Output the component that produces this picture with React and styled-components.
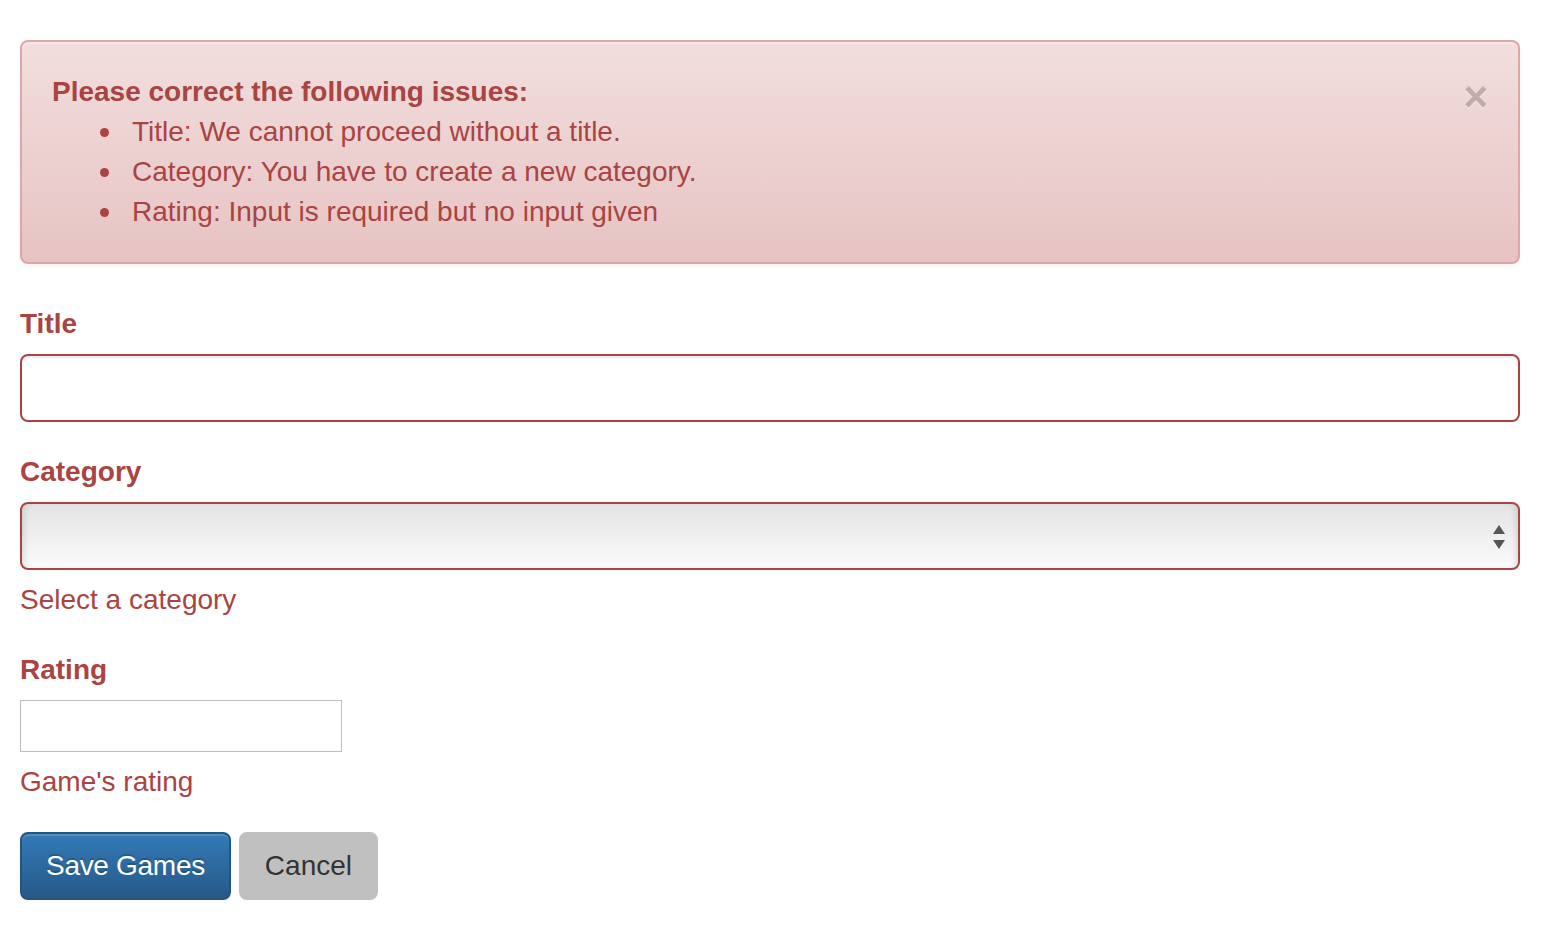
import React from "react";
import styled, { createGlobalStyle } from "styled-components";

const Global = createGlobalStyle`
  html, body { margin: 0; padding: 0; background: #fff; }
  body { font-family: "Liberation Sans", Arial, Helvetica, sans-serif; font-size: 28px; line-height: 40px; color: #333; }
  * { box-sizing: border-box; }
`;

const Page = styled.div`
  width: 1500px;
  margin-left: 20px;
  padding-top: 40px;
`;

const Alert = styled.div`
  position: relative;
  padding: 30px 70px 30px 30px;
  margin-bottom: 40px;
  border: 2px solid #dca7a7;
  border-radius: 8px;
  color: #a94442;
  background-image: linear-gradient(to bottom, #f2dede 0%, #e7c3c3 100%);
  box-shadow: inset 0 2px 0 rgba(255,255,255,.25), 0 2px 4px rgba(0,0,0,.05);
`;

const AlertTitle = styled.strong`
  display: block;
  font-weight: bold;
`;

const IssueList = styled.ul`
  margin: 0;
  padding-left: 80px;
  list-style: none;
`;

const Issue = styled.li`
  position: relative;
  line-height: 40px;
  &::before {
    content: "";
    position: absolute;
    left: -32px;
    top: 16px;
    width: 9px;
    height: 9px;
    border-radius: 50%;
    background: #a94442;
  }
`;

const Close = styled.button`
  position: absolute;
  top: 34px;
  right: 30px;
  padding: 0;
  border: 0;
  background: transparent;
  font-family: "Liberation Sans", Arial, sans-serif;
  font-size: 42px;
  font-weight: bold;
  line-height: 42px;
  color: #000;
  opacity: .2;
  text-shadow: 0 2px 0 #fff;
  cursor: pointer;
`;

const FormGroup = styled.div`
  margin-bottom: 30px;
  display: flow-root;
`;

const Label = styled.label`
  display: inline-block;
  margin-bottom: 10px;
  font-weight: bold;
  color: #a94442;
`;

const TextInput = styled.input`
  display: block;
  width: 100%;
  height: 68px;
  padding: 12px 24px;
  font: inherit;
  color: #555;
  background: #fff;
  border: 2px solid #a94442;
  border-radius: 8px;
  box-shadow: inset 0 2px 2px rgba(0,0,0,.075);
  outline: none;
`;

const SelectBox = styled.div`
  position: relative;
  height: 68px;
  border: 2px solid #a94442;
  border-radius: 8px;
  background: linear-gradient(to bottom, #e3e3e3 0%, #efefef 50%, #fbfbfb 100%);
  box-shadow: inset 6px 0 6px -4px rgba(0,0,0,.12), inset -6px 0 6px -4px rgba(0,0,0,.12);
`;

const Arrows = styled.svg`
  position: absolute;
  right: 12px;
  top: 20px;
`;

const Help = styled.span`
  display: block;
  margin-top: 10px;
  color: #a94442;
`;

const SmallInput = styled.input`
  display: block;
  width: 322px;
  height: 52px;
  border: 1px solid #bdbdbd;
  background: #fff;
  border-radius: 0;
  font: inherit;
  outline: none;
`;

const Actions = styled.div`
  display: flex;
  gap: 8px;
`;

const Button = styled.button`
  height: 68px;
  padding: 12px 24px;
  font-family: "Liberation Sans", Arial, sans-serif;
  font-size: 28px;
  line-height: 40px;
  border-radius: 8px;
  cursor: pointer;
  ${(p) =>
    p.$primary
      ? `
    color: #fff;
    letter-spacing: -0.3px;
    border: 2px solid #245580;
    background-image: linear-gradient(to bottom, #337ab7 0%, #265a88 100%);
    text-shadow: 0 -2px 0 rgba(0,0,0,.2);
    box-shadow: inset 0 2px 0 rgba(255,255,255,.15), 0 2px 2px rgba(0,0,0,.075);
  `
      : `
    color: #333;
    border: 2px solid #c0c0c0;
    background: #c0c0c0;
  `}
`;

export default function App() {
  return (
    <>
      <Global />
      <Page>
        <Alert>
          <Close aria-label="Close">×</Close>
          <AlertTitle>Please correct the following issues:</AlertTitle>
          <IssueList>
            <Issue>Title: We cannot proceed without a title.</Issue>
            <Issue>Category: You have to create a new category.</Issue>
            <Issue>Rating: Input is required but no input given</Issue>
          </IssueList>
        </Alert>

        <FormGroup>
          <Label>Title</Label>
          <TextInput type="text" />
        </FormGroup>

        <FormGroup>
          <Label>Category</Label>
          <SelectBox>
            <Arrows width="14" height="26" viewBox="0 0 14 26">
              <path d="M7 1 L13 10 L1 10 Z" fill="#555" />
              <path d="M1 16 L13 16 L7 25 Z" fill="#555" />
            </Arrows>
          </SelectBox>
          <Help>Select a category</Help>
        </FormGroup>

        <FormGroup>
          <Label>Rating</Label>
          <SmallInput type="text" />
          <Help>Game's rating</Help>
        </FormGroup>

        <Actions>
          <Button $primary>Save Games</Button>
          <Button>Cancel</Button>
        </Actions>
      </Page>
    </>
  );
}
